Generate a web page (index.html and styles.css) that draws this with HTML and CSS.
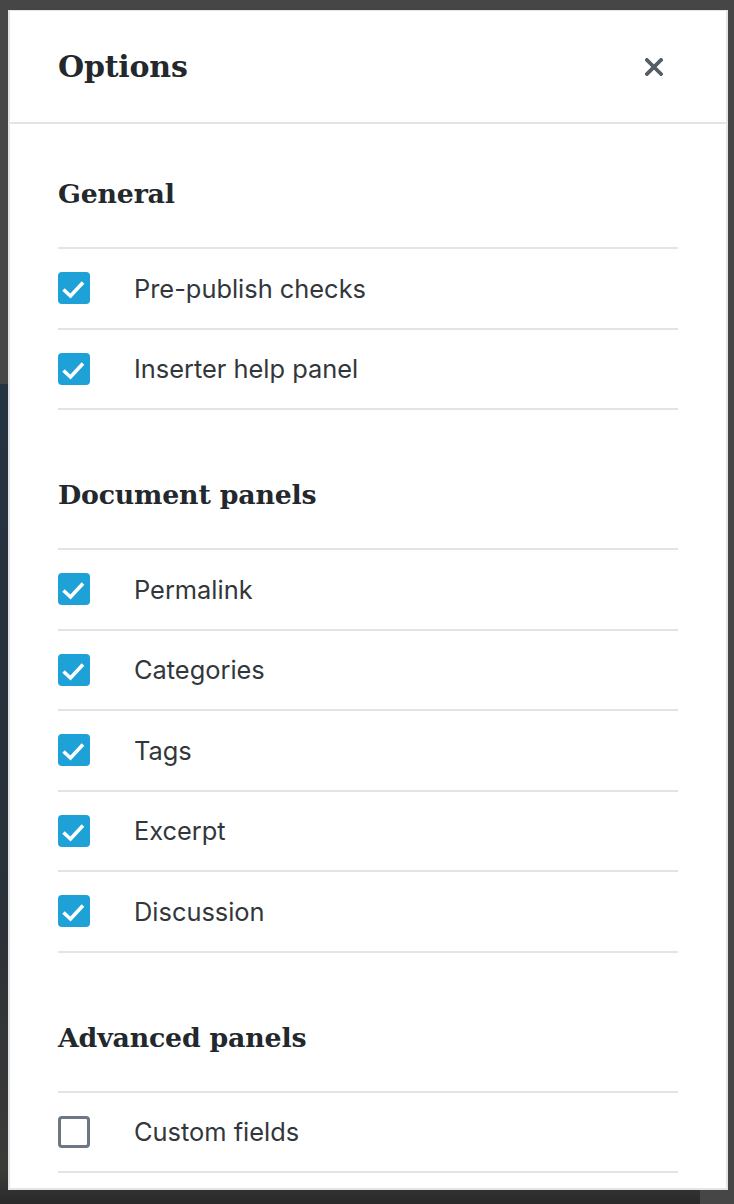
FILE: index.html
```html
<!DOCTYPE html>
<html lang="en">
<head>
<meta charset="utf-8">
<title>Options</title>
<link rel="stylesheet" href="styles.css">
</head>
<body>
<div class="backdrop" aria-hidden="true"></div>
<div class="modal" role="dialog" aria-labelledby="modal-title">
  <header class="modal-header">
    <h1 class="modal-title" id="modal-title">Options</h1>
    <button class="close" aria-label="Close dialog">
      <svg width="18" height="18" viewBox="0 0 18 18"><path d="M2 2 L16 16 M16 2 L2 16" stroke="#555d66" stroke-width="3.8" stroke-linecap="square" fill="none"/></svg>
    </button>
  </header>
  <div class="modal-content">
    <section class="section">
      <h2 class="section-title">General</h2>
      <ul class="options">
        <li class="option"><span class="box checked"><svg viewBox="0 0 32 32"><path d="M5.5 17.5 L12.5 24 L25 10.5" stroke="#fff" stroke-width="3.6" fill="none"/></svg></span><span class="label">Pre-publish checks</span></li>
        <li class="option"><span class="box checked"><svg viewBox="0 0 32 32"><path d="M5.5 17.5 L12.5 24 L25 10.5" stroke="#fff" stroke-width="3.6" fill="none"/></svg></span><span class="label">Inserter help panel</span></li>
      </ul>
    </section>
    <section class="section">
      <h2 class="section-title">Document panels</h2>
      <ul class="options">
        <li class="option"><span class="box checked"><svg viewBox="0 0 32 32"><path d="M5.5 17.5 L12.5 24 L25 10.5" stroke="#fff" stroke-width="3.6" fill="none"/></svg></span><span class="label">Permalink</span></li>
        <li class="option"><span class="box checked"><svg viewBox="0 0 32 32"><path d="M5.5 17.5 L12.5 24 L25 10.5" stroke="#fff" stroke-width="3.6" fill="none"/></svg></span><span class="label">Categories</span></li>
        <li class="option"><span class="box checked"><svg viewBox="0 0 32 32"><path d="M5.5 17.5 L12.5 24 L25 10.5" stroke="#fff" stroke-width="3.6" fill="none"/></svg></span><span class="label">Tags</span></li>
        <li class="option"><span class="box checked"><svg viewBox="0 0 32 32"><path d="M5.5 17.5 L12.5 24 L25 10.5" stroke="#fff" stroke-width="3.6" fill="none"/></svg></span><span class="label">Excerpt</span></li>
        <li class="option"><span class="box checked"><svg viewBox="0 0 32 32"><path d="M5.5 17.5 L12.5 24 L25 10.5" stroke="#fff" stroke-width="3.6" fill="none"/></svg></span><span class="label">Discussion</span></li>
      </ul>
    </section>
    <section class="section">
      <h2 class="section-title">Advanced panels</h2>
      <ul class="options">
        <li class="option"><span class="box"></span><span class="label">Custom fields</span></li>
      </ul>
    </section>
  </div>
</div>
</body>
</html>
```

FILE: styles.css
```css
html, body {
  margin: 0;
  padding: 0;
}
body {
  position: relative;
  width: 734px;
  height: 1204px;
  overflow: hidden;
  background: #464646;
  font-family: "Inter", "Liberation Sans", sans-serif;
}
.backdrop {
  position: absolute;
  left: 0;
  top: 384px;
  width: 700px;
  bottom: 0;
  background: linear-gradient(180deg, #263441 0%, #2a3038 60%, #3c3b38 96%, #2a2a2a 100%);
}
.modal {
  position: relative;
  box-sizing: border-box;
  width: 720px;
  height: 1180px;
  margin: 10px 0 0 8px;
  background: #fff;
  border: 2px solid #e2e4e7;
  border-top-width: 1px;
  overflow: hidden;
}
.modal-header {
  box-sizing: border-box;
  height: 113px;
  display: flex;
  align-items: center;
  justify-content: space-between;
  padding: 0 63px 0 48px;
  border-bottom: 2px solid #e2e4e7;
}
.modal-title {
  margin: 0;
  font-family: "DejaVu Serif", "Liberation Serif", serif;
  font-weight: bold;
  font-size: 30px;
  color: #23282d;
  letter-spacing: -0.2px;
}
.close {
  display: flex;
  padding: 0;
  border: 0;
  background: none;
}
.modal-content {
  padding: 0 48px;
}
.section + .section {
  padding-top: 15px;
}
.section-title {
  margin: 50px 0 33px;
  height: 40px;
  line-height: 40px;
  font-family: "DejaVu Serif", "Liberation Serif", serif;
  font-weight: bold;
  font-size: 26.8px;
  color: #23282d;
  letter-spacing: -0.2px;
}
.options {
  list-style: none;
  margin: 0;
  padding: 0;
  border-top: 2px solid #e2e4e7;
}
.option {
  display: flex;
  align-items: center;
  gap: 44px;
  height: 78.5px;
  border-bottom: 2px solid #e2e4e7;
}
.box {
  box-sizing: border-box;
  flex: none;
  width: 32px;
  height: 32px;
  border-radius: 4px;
  border: 3px solid #6c7781;
  background: #fff;
}
.box.checked {
  border: 0;
  background: #1ea1d6;
}
.box svg {
  display: block;
  width: 32px;
  height: 32px;
}
.label {
  font-size: 25.4px;
  color: #32373c;
}
```
